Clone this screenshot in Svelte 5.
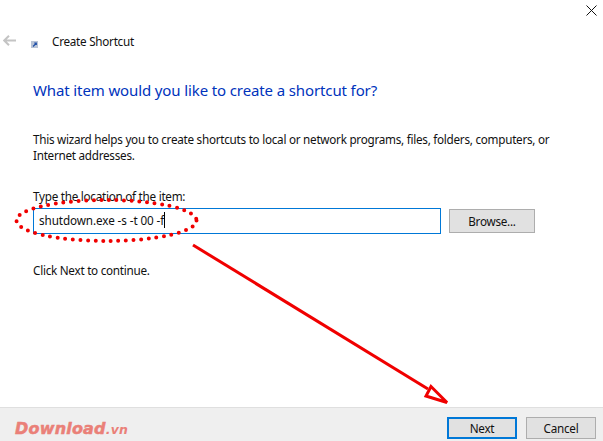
<script lang="ts">
  let location = 'shutdown.exe -s -t 00 -f'
</script>

<div class="wizard">
  <div class="close-row">
    <svg class="close" width="11" height="11" viewBox="0 0 11 11" aria-hidden="true">
      <path d="M0.5 0.5 L10.5 10.5 M10.5 0.5 L0.5 10.5" stroke="#111" stroke-width="1" fill="none" />
    </svg>
  </div>

  <div class="title-row">
    <svg class="back" width="13" height="11" viewBox="0 0 13 11" aria-hidden="true">
      <path d="M6 0.8 L1.2 5.5 L6 10.2 M1.2 5.5 H13" stroke="#c4c4c4" stroke-width="2" fill="none" />
    </svg>
    <svg class="app-icon" width="7" height="7" viewBox="0 0 7 7" aria-hidden="true">
      <rect width="7" height="7" fill="#b9c4d6" />
      <path d="M2 5.5 L5 2.5 M3.2 2 H5.3 V4" stroke="#1f4fa8" stroke-width="1.2" fill="none" />
    </svg>
    <span class="title">Create Shortcut</span>
  </div>

  <div class="content">
    <h1>What item would you like to create a shortcut for?</h1>
    <p class="intro">This wizard helps you to create shortcuts to local or network programs, files, folders, computers, or Internet addresses.</p>
    <label for="loc">Type the location of the item:</label>
    <div class="field-row">
      <div class="input" id="loc"><span>{location}</span><i class="caret"></i></div>
      <button class="btn browse">Browse...</button>
    </div>
    <p class="hint">Click Next to continue.</p>
  </div>

  <div class="footer">
    <span class="logo">Download<small>.vn</small></span>
    <div class="actions">
      <button class="btn next">Next</button>
      <button class="btn">Cancel</button>
    </div>
  </div>

  <svg class="marks" width="603" height="441" viewBox="0 0 603 441" aria-hidden="true">
    <ellipse cx="106.5" cy="220.5" rx="90" ry="20.5" fill="none" stroke="#f00000" stroke-width="4" stroke-linecap="round" stroke-dasharray="0 7.6" />
    <path d="M193 245 L428 389" stroke="#f00000" stroke-width="3" fill="none" />
    <path d="M431 386.5 L447 402.5 L426 396 Z" fill="#fff" stroke="#f00000" stroke-width="3" stroke-linejoin="miter" />
  </svg>
</div>

<style>
  :global(body) {
    margin: 0;
    background: #fff;
  }

  .wizard {
    position: relative;
    width: 603px;
    height: 441px;
    display: flex;
    flex-direction: column;
    overflow: hidden;
    font-family: "Noto Sans", "Open Sans", sans-serif;
    font-size: 11.7px;
    letter-spacing: -0.26px;
    color: #111;
    background: #fff;
  }

  .close-row {
    height: 5px;
    display: flex;
    justify-content: flex-end;
    padding-top: 5px;
    padding-right: 6px;
  }

  .close {
    display: block;
  }

  .title-row {
    display: flex;
    align-items: flex-start;
    height: 38px;
    padding-top: 21px;
    padding-left: 3px;
  }

  .back {
    margin-top: 4px;
  }

  .app-icon {
    margin-top: 10px;
    margin-left: 15px;
  }

  .title {
    margin-left: 14px;
    line-height: 20px;
  }

  .content {
    flex: 1;
    padding: 10px 0 0 33px;
  }

  h1 {
    margin: 0;
    font-size: 15px;
    font-weight: 400;
    line-height: 22px;
    letter-spacing: -0.12px;
    color: #0033bc;
  }

  .intro {
    margin: 30px 0 0;
    width: 530px;
    line-height: 16px;
  }

  label {
    display: block;
    margin-top: 26px;
    line-height: 15px;
  }

  .field-row {
    display: flex;
    align-items: center;
    gap: 8px;
    margin-top: 4px;
  }

  .input {
    box-sizing: border-box;
    width: 408px;
    height: 26px;
    border: 1px solid #0078d7;
    padding-left: 5px;
    padding-bottom: 3px;
    display: flex;
    align-items: center;
    letter-spacing: -0.09px;
  }

  .caret {
    width: 1px;
    height: 16px;
    background: #000;
  }

  .btn {
    box-sizing: border-box;
    width: 70px;
    height: 22px;
    padding: 0;
    background: #e1e1e1;
    border: 1px solid #adadad;
    font: inherit;
    letter-spacing: inherit;
    color: #111;
  }

  .browse {
    width: 86px;
    height: 24px;
  }

  .hint {
    margin: 29px 0 0;
    line-height: 15px;
  }

  .footer {
    box-sizing: border-box;
    height: 34px;
    background: #efefef;
    border-top: 1px solid #dfdfdf;
    display: flex;
    justify-content: space-between;
    align-items: flex-start;
    padding: 9px 7px 0 15px;
  }

  .logo {
    font-family: "DejaVu Sans", sans-serif;
    font-size: 16px;
    font-weight: 700;
    font-style: italic;
    line-height: 24px;
    color: #ea8078;
    letter-spacing: 0.2px;
    -webkit-text-stroke: 0.5px #ea8078;
  }

  .logo small {
    font-size: 12.5px;
    letter-spacing: 0.2px;
    -webkit-text-stroke: 0;
  }

  .actions {
    display: flex;
    gap: 9px;
  }

  .next {
    border: 2px solid #0078d7;
  }

  .marks {
    position: absolute;
    inset: 0;
    pointer-events: none;
  }
</style>
